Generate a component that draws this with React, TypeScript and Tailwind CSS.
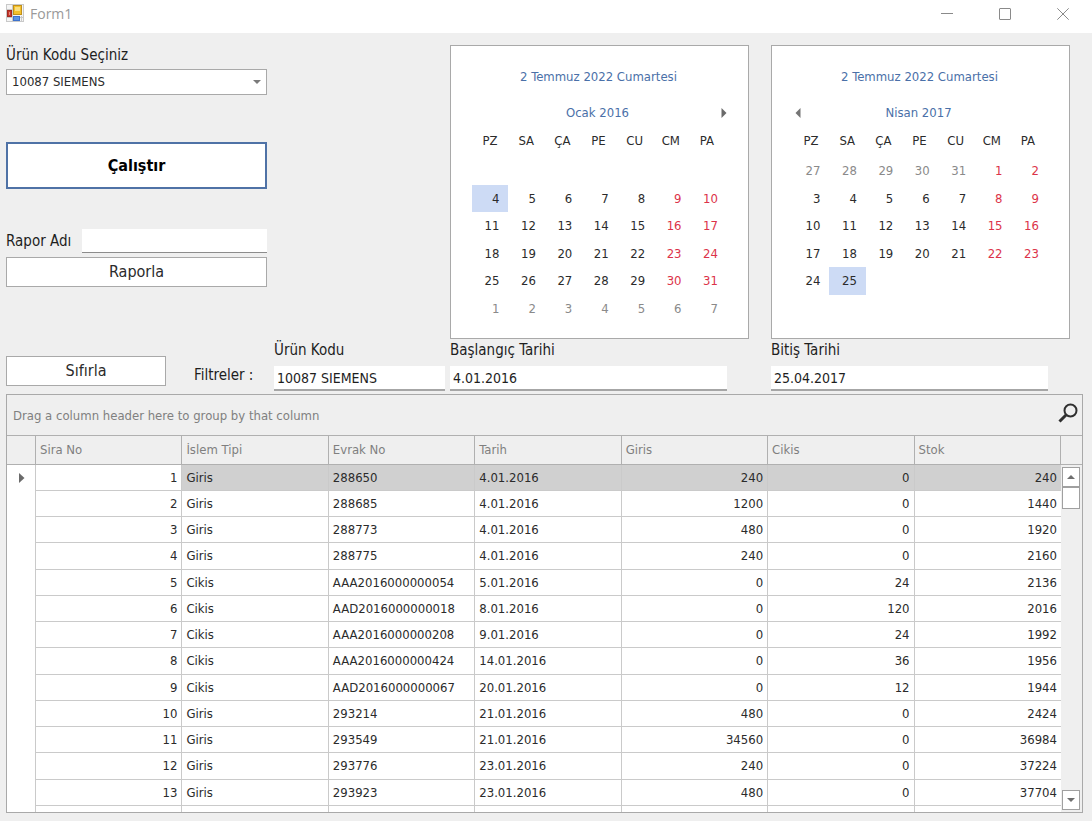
import React from 'react';

type Kind = 'normal' | 'muted' | 'weekend' | 'selected';
type Day = { label: string; kind: Kind };

const weekdays = ['PZ', 'SA', 'ÇA', 'PE', 'CU', 'CM', 'PA'];

const kindClass: Record<Kind, string> = {
  normal: 'text-[#2b2b2b]',
  muted: 'text-[#8a8a8a]',
  weekend: 'text-[#dc3349]',
  selected: 'bg-[#cddbf5] text-[#2b2b2b]',
};

function range(from: number, to: number): number[] {
  return Array.from({ length: to - from + 1 }, (_, i) => from + i);
}

function monthDays(first: number, last: number, selected: number): Day[] {
  return range(first, last).map((n, i) => ({
    label: String(n),
    kind: n === selected ? 'selected' : i % 7 > 4 ? 'weekend' : 'normal',
  }));
}

const blanks = (count: number): Day[] => Array.from({ length: count }, () => ({ label: '', kind: 'normal' as Kind }));
const mutedDays = (from: number, to: number): Day[] => range(from, to).map((n) => ({ label: String(n), kind: 'muted' as Kind }));

const january: Day[] = [...blanks(7), ...monthDays(4, 31, 4), ...mutedDays(1, 7)];
const april: Day[] = [
  ...mutedDays(27, 31),
  { label: '1', kind: 'weekend' },
  { label: '2', kind: 'weekend' },
  ...monthDays(3, 25, 25),
];

function Calendar({ month, days, prev, next }: { month: string; days: Day[]; prev?: boolean; next?: boolean }) {
  return (
    <section aria-label={month} className="flex h-[294px] w-[299px] flex-col border border-[#a9a9a9] bg-white px-[21px] pt-[21px]">
      <button type="button" className="h-5 pr-[2px] text-center text-[13px] leading-5 text-[#4a70a8]">
        2 Temmuz 2022 Cumartesi
      </button>
      <div className="mt-4 flex h-5 items-center justify-between">
        <span className="flex w-2 justify-end">
          {prev && (
            <button type="button" aria-label="Önceki ay">
              <svg width="6" height="10" viewBox="0 0 6 10" className="block" fill="#757575"><path d="M5.5 0v10L0.5 5z" /></svg>
            </button>
          )}
        </span>
        <span className="pr-1 text-[13px] leading-5 text-[#4a70a8]">{month}</span>
        <span className="flex w-2 justify-end">
          {next && (
            <button type="button" aria-label="Sonraki ay">
              <svg width="6" height="10" viewBox="0 0 6 10" className="block" fill="#6a6a6a"><path d="M0.5 0v10L5.5 5z" /></svg>
            </button>
          )}
        </span>
      </div>
      <div className="mt-2 grid h-5 grid-cols-7 pr-[2px] text-center text-[13px] leading-5 text-[#2b2b2b]">
        {weekdays.map((w) => (
          <span key={w}>{w}</span>
        ))}
      </div>
      <div className="mt-[6px] grid h-[165px] grid-cols-7 grid-rows-6 text-[13px]">
        {days.map((d, i) =>
          d.label ? (
            <button key={i} type="button" className={`pr-[9px] text-right ${kindClass[d.kind]}`}>
              {d.label}
            </button>
          ) : (
            <span key={i} />
          ),
        )}
      </div>
    </section>
  );
}

const columns = ['Sira No', 'İslem Tipi', 'Evrak No', 'Tarih', 'Giris', 'Cikis', 'Stok'];
const numeric = [true, false, false, false, true, true, true];

const rows: string[][] = [
  ['1', 'Giris', '288650', '4.01.2016', '240', '0', '240'],
  ['2', 'Giris', '288685', '4.01.2016', '1200', '0', '1440'],
  ['3', 'Giris', '288773', '4.01.2016', '480', '0', '1920'],
  ['4', 'Giris', '288775', '4.01.2016', '240', '0', '2160'],
  ['5', 'Cikis', 'AAA2016000000054', '5.01.2016', '0', '24', '2136'],
  ['6', 'Cikis', 'AAD2016000000018', '8.01.2016', '0', '120', '2016'],
  ['7', 'Cikis', 'AAA2016000000208', '9.01.2016', '0', '24', '1992'],
  ['8', 'Cikis', 'AAA2016000000424', '14.01.2016', '0', '36', '1956'],
  ['9', 'Cikis', 'AAD2016000000067', '20.01.2016', '0', '12', '1944'],
  ['10', 'Giris', '293214', '21.01.2016', '480', '0', '2424'],
  ['11', 'Giris', '293549', '21.01.2016', '34560', '0', '36984'],
  ['12', 'Giris', '293776', '23.01.2016', '240', '0', '37224'],
  ['13', 'Giris', '293923', '23.01.2016', '480', '0', '37704'],
  ['', '', '', '', '', '', ''],
];

function FilterField({ id, label, value, width }: { id: string; label: string; value: string; width: string }) {
  return (
    <div className={`flex flex-col ${width}`}>
      <label htmlFor={id} className="h-5 text-[15px] leading-5 text-[#1e1e1e]">{label}</label>
      <input
        id={id}
        type="text"
        defaultValue={value}
        className="mt-[6px] h-[25px] w-full border-b-2 border-[#a6a6a6] bg-white px-[3px] text-[14px] text-[#1e1e1e] outline-none"
      />
    </div>
  );
}

function TitleBar() {
  return (
    <header className="flex h-[33px] shrink-0 items-start bg-white pl-[6px]">
      <svg width="18" height="18" viewBox="0 0 18 18" className="mt-1">
        <rect x="0.5" y="0.5" width="17" height="17" fill="#f4f4f4" stroke="#c9c9c9" />
        <path d="M6.5 1v16M1 5.5h6M1 13.5h16M15.5 12v5" stroke="#c9c9c9" fill="none" />
        <rect x="7.5" y="1.5" width="8" height="9" fill="#f3c02c" stroke="#c1901a" />
        <rect x="9" y="3" width="5" height="4" fill="#fbdf7c" />
        <rect x="1.5" y="6.5" width="4" height="6" fill="#c8372c" stroke="#a32a22" />
        <rect x="3" y="8" width="1" height="3" fill="#e58a80" />
        <rect x="7.5" y="12.5" width="6" height="4" fill="#5b93e6" stroke="#3d72cc" />
      </svg>
      <h1 className="ml-[6px] h-7 flex-1 font-['Open_Sans',sans-serif] text-[14px] leading-7 text-[#999999]">Form1</h1>
      <div className="flex h-7 text-[#8a8a8a]">
        <button type="button" aria-label="Simge durumuna küçült" className="flex w-[58px] items-center justify-center">
          <svg width="12" height="12" viewBox="0 0 12 12" stroke="currentColor" fill="none"><path d="M0 5.5h12" /></svg>
        </button>
        <button type="button" aria-label="Ekranı kapla" className="flex w-[58px] items-center justify-center">
          <svg width="12" height="12" viewBox="0 0 12 12" stroke="currentColor" fill="none"><rect x="0.5" y="0.5" width="11" height="11" rx="0.5" /></svg>
        </button>
        <button type="button" aria-label="Kapat" className="flex w-[58px] items-center justify-center">
          <svg width="12" height="12" viewBox="0 0 12 12" stroke="currentColor" fill="none"><path d="M0.3 0.3l11.4 11.4M11.7 0.3L0.3 11.7" /></svg>
        </button>
      </div>
    </header>
  );
}

function StockGrid() {
  return (
    <section className="ml-[6px] mr-[9px] mb-2 mt-[3px] flex min-h-[240px] flex-1 flex-col overflow-hidden border border-[#a9a9a9]">
      <div className="flex h-10 shrink-0 items-center justify-between pl-[6px] pr-1">
        <span className="pt-[2px] text-[13px] text-[#808080]">Drag a column header here to group by that column</span>
        <button type="button" aria-label="Ara" className="pb-1">
          <svg width="20" height="20" viewBox="0 0 20 20" fill="none" stroke="#2f2f2f" className="block">
            <circle cx="12.5" cy="7.5" r="6" strokeWidth="2" />
            <path d="M8 12L1.5 18.5" strokeWidth="3" />
          </svg>
        </button>
      </div>
      <div className="flex min-h-0 flex-1 items-stretch border-t border-[#b0b0b0]">
        <div className="min-h-0 flex-1 overflow-hidden">
          <table className="w-full table-fixed border-separate border-spacing-0 text-[13px] leading-5 text-[#2b2b2b]">
            <thead>
              <tr className="h-[29px] text-left text-[#7f7f7f]">
                <th className="w-[29px] border-b border-r border-[#b0b0b0] p-0" aria-label="Satır" />
                {columns.map((c) => (
                  <th key={c} className="border-b border-r border-[#b0b0b0] px-1 py-0 font-normal">
                    {c}
                  </th>
                ))}
              </tr>
            </thead>
            <tbody>
              {rows.map((r, i) => (
                <tr key={i} className={i % 4 === 3 ? 'h-[27px]' : 'h-[26px]'}>
                  <td className="border-r border-[#cacaca] bg-white p-0">
                    {i === 0 && (
                      <svg width="6" height="10" viewBox="0 0 6 10" fill="#6a6a6a" className="ml-3 block"><path d="M0 0v10L5.5 5z" /></svg>
                    )}
                  </td>
                  {r.map((v, j) => (
                    <td
                      key={j}
                      className={`border-b border-[#cacaca] px-1 py-0 ${j < 6 ? 'border-r' : ''} ${numeric[j] ? 'text-right' : 'text-left'} ${
                        i === 0 && j > 0 ? 'bg-[#d0d0d0]' : 'bg-white'
                      }`}
                    >
                      {v}
                    </td>
                  ))}
                </tr>
              ))}
            </tbody>
          </table>
        </div>
        <div className="flex w-[21px] shrink-0 flex-col">
          <div className="h-[29px] border-b border-[#b0b0b0]" />
          <div className="flex flex-1 flex-col pb-[2px] pl-px pr-[2px] pt-[2px]">
            <button type="button" aria-label="Yukarı kaydır" className="flex h-5 items-center justify-center border border-[#a0a0a0] bg-white">
              <svg width="8" height="4" viewBox="0 0 8 4" fill="#6f6f6f"><path d="M0 4h8L4 0z" /></svg>
            </button>
            <div className="h-[22px] border border-[#a0a0a0] bg-white" />
            <button type="button" aria-label="Aşağı kaydır" className="mt-auto flex h-5 items-center justify-center border border-[#a0a0a0] bg-white">
              <svg width="8" height="4" viewBox="0 0 8 4" fill="#6f6f6f"><path d="M0 0h8L4 4z" /></svg>
            </button>
          </div>
        </div>
      </div>
    </section>
  );
}

export default function App() {
  return (
    <div className="flex h-screen flex-col bg-[#efefef] font-['DejaVu_Sans_Condensed','DejaVu_Sans',sans-serif]">
      <TitleBar />
      <main className="flex min-h-0 flex-1 flex-col">
        <div className="grid grid-cols-[444px_321px_1fr] pl-[6px] pt-3">
          <div className="flex w-[261px] flex-col">
            <label htmlFor="product" className="h-5 text-[15px] leading-5 text-[#1e1e1e]">Ürün Kodu Seçiniz</label>
            <div className="relative mt-1">
              <select
                id="product"
                defaultValue="10087"
                className="block h-[26px] w-full appearance-none border border-[#a9a9a9] bg-white px-[5px] text-[13px] text-[#2b2b2b] outline-none"
              >
                <option value="10087">10087 SIEMENS</option>
              </select>
              <svg width="8" height="4" viewBox="0 0 8 4" fill="#7a7a7a" className="pointer-events-none absolute right-[6px] top-[11px]"><path d="M0 0h8L4 4z" /></svg>
            </div>
            <button type="button" className="mt-[47px] h-[47px] border-2 border-[#4f72a6] bg-white text-[16px] font-bold text-black">
              Çalıştır
            </button>
            <div className="mt-10 flex items-center">
              <label htmlFor="report" className="w-[76px] text-[15px] leading-5 text-[#1e1e1e]">Rapor Adı</label>
              <input id="report" type="text" className="h-6 min-w-0 flex-1 border-b border-[#8c8c8c] bg-white px-1 text-[14px] outline-none" />
            </div>
            <button type="button" className="mt-1 h-[30px] border border-[#a9a9a9] bg-white text-[16px] text-[#2b2b2b]">
              Raporla
            </button>
          </div>
          <Calendar month="Ocak 2016" days={january} next />
          <Calendar month="Nisan 2017" days={april} prev />
        </div>
        <div className="grid grid-cols-[444px_321px_1fr] pl-[6px] pt-[1px]">
          <div className="flex">
            <button type="button" className="mt-4 h-[30px] w-40 border border-[#a9a9a9] bg-white text-[16px] text-[#2b2b2b]">
              Sıfırla
            </button>
            <span className="ml-7 mt-[25px] w-20 text-[15px] leading-5 text-[#1e1e1e]">Filtreler :</span>
            <FilterField id="f-code" label="Ürün Kodu" value="10087 SIEMENS" width="w-[171px]" />
          </div>
          <FilterField id="f-start" label="Başlangıç Tarihi" value="4.01.2016" width="w-[277px]" />
          <FilterField id="f-end" label="Bitiş Tarihi" value="25.04.2017" width="w-[277px]" />
        </div>
        <StockGrid />
      </main>
    </div>
  );
}
